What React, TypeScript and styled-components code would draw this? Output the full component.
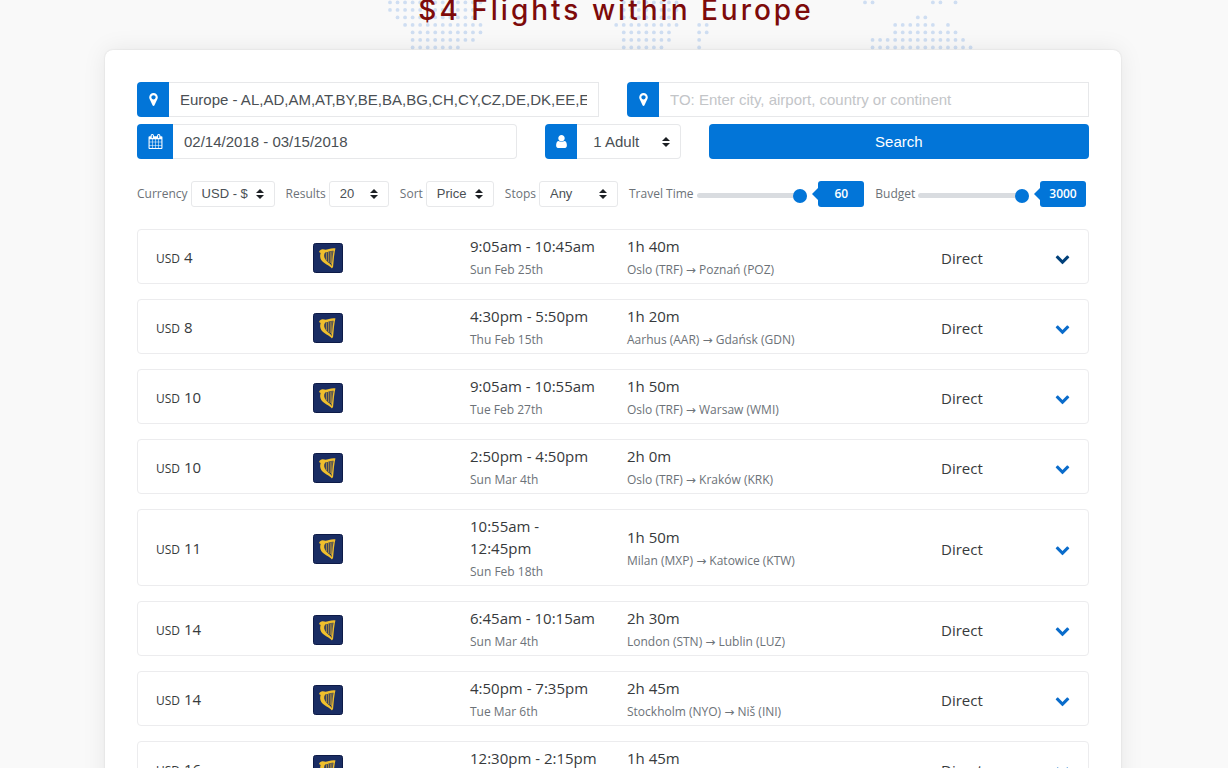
import React, { useState } from "react";
import styled, { createGlobalStyle } from "styled-components";

const BLUE = "#0275d8";
const SANS = `"Liberation Sans", Arial, sans-serif`;

const GlobalStyle = createGlobalStyle`
  *, *::before, *::after { box-sizing: border-box; }
  body {
    margin: 0;
    background: #f9f9f9;
    color: #373a3c;
    font: 15px/22px "Open Sans", "Noto Sans", sans-serif;
    overflow-x: hidden;
  }
`;

const Page = styled.main`
  padding: 0 107px 0 105px;
`;

const Header = styled.header`
  position: relative;
  height: 50px;
  display: flex;
  align-items: flex-end;
  justify-content: center;
`;

const Title = styled.h1`
  position: relative;
  flex: none;
  margin: 0;
  padding: 0 0 20px 6px;
  color: #7d0a0a;
  font: 500 28px/40px Inter, "Open Sans", sans-serif;
  letter-spacing: 3px;
  white-space: nowrap;
`;

const DotMap = styled.svg`
  position: absolute;
  left: 50%;
  bottom: 0;
  width: 600px;
  height: 50px;
  margin-left: -227px;
  fill: #cfdef2;
`;

const Card = styled.section`
  position: relative;
  padding: 32px;
  background: #fff;
  border-radius: 8px 8px 0 0;
  box-shadow: 0 0 24px rgba(0, 0, 0, 0.08), 0 0 2px rgba(0, 0, 0, 0.12);
`;

const SearchForm = styled.form`
  display: grid;
  grid-template-columns: repeat(12, minmax(0, 1fr));
  gap: 7px 28px;
`;

const Field = styled.label<{ $span: number }>`
  grid-column: span ${(p) => p.$span};
  display: flex;
  height: 35px;
`;

const Addon = styled.span<{ $wide?: boolean }>`
  flex: none;
  display: flex;
  align-items: center;
  justify-content: center;
  width: ${(p) => (p.$wide ? 36 : 32)}px;
  background: ${BLUE};
  color: #fff;
  border-radius: 4px 0 0 4px;
`;

const TextInput = styled.input<{ $rounded?: boolean }>`
  flex: 1;
  min-width: 0;
  height: 35px;
  padding: 0 11px;
  border: 1px solid #e7e8ea;
  border-left: 0;
  border-radius: ${(p) => (p.$rounded ? "0 4px 4px 0" : "0")};
  background: #fff;
  color: #4a4f54;
  font: 15px/22px ${SANS};
  outline: none;
  &::placeholder { color: #c3c5c8; opacity: 1; }
`;

const SelectWrap = styled.span<{ $w?: number }>`
  position: relative;
  display: flex;
  ${(p) => (p.$w ? `width: ${p.$w}px;` : "flex: 1; min-width: 0;")}
`;

const Select = styled.select<{ $large?: boolean }>`
  appearance: none;
  width: 100%;
  height: ${(p) => (p.$large ? 35 : 26)}px;
  padding: 0 ${(p) => (p.$large ? "24px 0 16px" : "20px 0 10px")};
  border: 1px solid #e7e8ea;
  ${(p) => p.$large && "border-left: 0;"}
  border-radius: ${(p) => (p.$large ? "0 4px 4px 0" : "3px")};
  background: #fff;
  color: #4a4f54;
  font: ${(p) => (p.$large ? 15 : 13)}px/22px ${SANS};
  outline: none;
`;

const Caret = styled.svg`
  position: absolute;
  right: 11px;
  top: 50%;
  width: 8px;
  height: 10px;
  margin-top: -5px;
  fill: #1d2024;
  pointer-events: none;
`;

const SearchButton = styled.button`
  grid-column: span 5;
  height: 35px;
  border: 0;
  border-radius: 4px;
  background: ${BLUE};
  color: #fff;
  font: 15px/22px ${SANS};
  cursor: pointer;
`;

const Filters = styled.div`
  display: flex;
  align-items: center;
  gap: 11px;
  margin: 22px 3px 22px 0;
  color: #6c7278;
  font-size: 12px;
`;

const Filter = styled.label`
  display: flex;
  align-items: center;
  gap: 3px;
  white-space: nowrap;
`;

const RangeFilter = styled(Filter)`
  flex: 1 1 auto;
`;

const Range = styled.input`
  appearance: none;
  flex: 1 1 auto;
  min-width: 0;
  width: 100px;
  height: 14px;
  margin: 3px 0 0;
  background: transparent;
  &::-webkit-slider-runnable-track {
    height: 5px;
    border-radius: 3px;
    background: #d9dce0;
  }
  &::-webkit-slider-thumb {
    appearance: none;
    width: 14px;
    height: 14px;
    margin-top: -4px;
    border-radius: 50%;
    background: ${BLUE};
  }
`;

const Bubble = styled.output`
  position: relative;
  flex: none;
  width: 46px;
  height: 26px;
  margin-left: 8px;
  border-radius: 3px;
  background: ${BLUE};
  color: #fff;
  font-weight: 600;
  line-height: 26px;
  text-align: center;
  &::before {
    content: "";
    position: absolute;
    left: -6px;
    top: 7px;
    border: solid transparent;
    border-width: 6px 6px 6px 0;
    border-right-color: ${BLUE};
  }
`;

const Results = styled.ul`
  display: grid;
  gap: 15px;
  margin: 0;
  padding: 0;
  list-style: none;
`;

const Flight = styled.li`
  display: grid;
  grid-template-columns: repeat(6, minmax(0, 1fr));
  column-gap: 28px;
  align-items: center;
  padding: 5px 18px 3px;
  border: 1px solid #ececee;
  border-radius: 4px;
`;

const Cell = styled.div<{ $span?: number }>`
  grid-column: span ${(p) => p.$span ?? 1};
`;

const Main = styled.div`
  font-size: 15px;
  line-height: 22px;
`;

const Sub = styled.div`
  padding-top: 3px;
  color: #6c7278;
  font-size: 12px;
  line-height: 20px;
`;

const Unit = styled.span`
  font-size: 12px;
`;

const Arrow = styled.span`
  font-family: "DejaVu Sans", sans-serif;
  line-height: 12px;
`;

const Logo = styled.svg`
  display: block;
  width: 30px;
  height: 30px;
`;

const StopsCell = styled(Cell)`
  display: flex;
  align-items: center;
  justify-content: space-between;
`;

const Expand = styled.button<{ $active?: boolean }>`
  display: flex;
  padding: 2px 0 0;
  border: 0;
  background: none;
  color: ${(p) => (p.$active ? "#01407a" : "#0a6ccb")};
  cursor: pointer;
`;

const ICONS = {
  marker:
    "M1152 640q0-106-75-181t-181-75-181 75-75 181 75 181 181 75 181-75 75-181zm256 0q0 109-33 179l-364 774q-16 33-47.5 52t-67.5 19-67.5-19-46.5-52l-365-774q-33-70-33-179 0-212 150-362t362-150 362 150 150 362z",
  calendar:
    "M192 1664h288v-288h-288v288zm352 0h320v-288h-320v288zm-352-352h288v-320h-288v320zm352 0h320v-320h-320v320zm-352-384h288v-288h-288v288zm736 736h320v-288h-320v288zm-384-736h320v-288h-320v288zm768 736h288v-288h-288v288zm-384-352h320v-320h-320v320zm-352-864v-288q0-13-9.5-22.5t-22.5-9.5h-64q-13 0-22.5 9.5t-9.5 22.5v288q0 13 9.5 22.5t22.5 9.5h64q13 0 22.5-9.5t9.5-22.5zm736 864h288v-320h-288v320zm-384-384h320v-288h-320v288zm384 0h288v-288h-288v288zm32-480v-288q0-13-9.5-22.5t-22.5-9.5h-64q-13 0-22.5 9.5t-9.5 22.5v288q0 13 9.5 22.5t22.5 9.5h64q13 0 22.5-9.5t9.5-22.5zm384-64v1280q0 52-38 90t-90 38h-1408q-52 0-90-38t-38-90v-1280q0-52 38-90t90-38h128v-96q0-66 47-113t113-47h64q66 0 113 47t47 113v96h384v-96q0-66 47-113t113-47h64q66 0 113 47t47 113v96h128q52 0 90 38t38 90z",
  user:
    "M1536 1399q0 109-62.5 187t-150.5 78h-854q-88 0-150.5-78t-62.5-187q0-85 8.5-160.5t31.5-152 58.5-131 94-89 134.5-34.5q131 128 313 128t313-128q76 0 134.5 34.5t94 89 58.5 131 31.5 152 8.5 160.5zm-256-887q0 159-112.5 271.5t-271.5 112.5-271.5-112.5-112.5-271.5 112.5-271.5 271.5-112.5 271.5 112.5 112.5 271.5z",
  chevron:
    "M1683 808l-742 741q-19 19-45 19t-45-19l-742-741q-19-19-19-45.5t19-45.5l166-165q19-19 45-19t45 19l531 531 531-531q19-19 45-19t45 19l166 165q19 19 19 45.5t-19 45.5z",
};

const Icon = ({ name, size = 15 }: { name: keyof typeof ICONS; size?: number }) => (
  <svg width={size} height={size} viewBox="0 0 1792 1792" fill="currentColor" aria-hidden="true">
    <path d={ICONS[name]} />
  </svg>
);

/* Each row of the world map lists runs of dots as [first column, last column]. */
const MAP_ROWS: [number, number][][] = [
  [[0, 12], [31, 38], [63, 64], [72, 73], [75, 75]],
  [[0, 12], [31, 38]],
  [[1, 11], [31, 37], [70, 71]],
  [[2, 12], [30, 38], [41, 42], [67, 72], [74, 74]],
  [[3, 12], [31, 37], [41, 42], [67, 75]],
  [[3, 11], [31, 37], [41, 41], [64, 76]],
  [[3, 9], [31, 36], [41, 41], [64, 77]],
];

const WorldDots = () => (
  <DotMap viewBox="0 0 600 50" aria-hidden="true">
    {MAP_ROWS.flatMap((runs, row) =>
      runs.flatMap(([from, to]) =>
        Array.from({ length: to - from + 1 }, (_, i) => (
          <circle key={`${row}-${from + i}`} cx={4 + (from + i) * 7.54} cy={2.4 + row * 7.5} r={1.9} />
        ))
      )
    )}
  </DotMap>
);

const HarpLogo = () => (
  <Logo viewBox="0 0 30 30" role="img" aria-label="Ryanair">
    <rect x="0.5" y="0.5" width="29" height="29" rx="2" fill="#1a2d63" stroke="#0d1a47" />
    <path
      d="M6 9C7 6.500 9 5.600 11 6.600C14 7.400 17 4.800 22.500 5.400L21.800 8C17.500 7.300 15.500 9.600 12.200 9.600C10.600 11.500 11 15 13 17.200C15 19.500 18.500 21.500 19.500 24L19 25.500C16 22 11 20.800 8.400 17.200C6.800 14.800 7 12 7.600 10Z"
      fill="#f0bf2c"
    />
    <path d="M21.300 7L20.300 14L19.300 24.500" fill="none" stroke="#f0bf2c" strokeWidth="1.400" />
    <path
      d="M13.300 9.600V17.500M15.300 9V19M17.200 8.400V20M19 8L18.600 21.500"
      fill="none"
      stroke="#cda53a"
      strokeWidth="0.900"
    />
  </Logo>
);

const Dropdown = ({
  label,
  options,
  width,
  large,
}: {
  label: string;
  options: string[];
  width?: number;
  large?: boolean;
}) => (
  <SelectWrap $w={width}>
    <Select $large={large} aria-label={label} defaultValue={options[0]}>
      {options.map((o) => (
        <option key={o}>{o}</option>
      ))}
    </Select>
    <Caret viewBox="0 0 8 10" aria-hidden="true">
      <path d="M4 0L8 4H0zM4 10L0 6H8z" />
    </Caret>
  </SelectWrap>
);

const Slider = ({ label, max }: { label: string; max: number }) => {
  const [value, setValue] = useState(max);
  return (
    <RangeFilter>
      {label}
      <Range
        type="range"
        aria-label={label}
        min={0}
        max={max}
        value={value}
        onChange={(e) => setValue(Number(e.target.value))}
      />
      <Bubble>{value}</Bubble>
    </RangeFilter>
  );
};

type FlightData = { price: number; time: string; date: string; duration: string; from: string; to: string };

const FLIGHTS: FlightData[] = [
  { price: 4, time: "9:05am - 10:45am", date: "Sun Feb 25th", duration: "1h 40m", from: "Oslo (TRF)", to: "Poznań (POZ)" },
  { price: 8, time: "4:30pm - 5:50pm", date: "Thu Feb 15th", duration: "1h 20m", from: "Aarhus (AAR)", to: "Gdańsk (GDN)" },
  { price: 10, time: "9:05am - 10:55am", date: "Tue Feb 27th", duration: "1h 50m", from: "Oslo (TRF)", to: "Warsaw (WMI)" },
  { price: 10, time: "2:50pm - 4:50pm", date: "Sun Mar 4th", duration: "2h 0m", from: "Oslo (TRF)", to: "Kraków (KRK)" },
  { price: 11, time: "10:55am - 12:45pm", date: "Sun Feb 18th", duration: "1h 50m", from: "Milan (MXP)", to: "Katowice (KTW)" },
  { price: 14, time: "6:45am - 10:15am", date: "Sun Mar 4th", duration: "2h 30m", from: "London (STN)", to: "Lublin (LUZ)" },
  { price: 14, time: "4:50pm - 7:35pm", date: "Tue Mar 6th", duration: "2h 45m", from: "Stockholm (NYO)", to: "Niš (INI)" },
  { price: 16, time: "12:30pm - 2:15pm", date: "Wed Mar 7th", duration: "1h 45m", from: "Oslo (TRF)", to: "Vilnius (VNO)" },
];

const FlightRow = ({ flight, active }: { flight: FlightData; active: boolean }) => (
  <Flight>
    <Cell>
      <Main>
        <Unit>USD</Unit> {flight.price}
      </Main>
    </Cell>
    <Cell>
      <HarpLogo />
    </Cell>
    <Cell>
      <Main>{flight.time}</Main>
      <Sub>{flight.date}</Sub>
    </Cell>
    <Cell $span={2}>
      <Main>{flight.duration}</Main>
      <Sub>
        {flight.from} <Arrow>→</Arrow> {flight.to}
      </Sub>
    </Cell>
    <StopsCell>
      <Main>Direct</Main>
      <Expand type="button" $active={active} aria-label="Show flight details">
        <Icon name="chevron" />
      </Expand>
    </StopsCell>
  </Flight>
);

export default function App() {
  return (
    <>
      <GlobalStyle />
      <Page>
        <Header>
          <WorldDots />
          <Title>$4 Flights within Europe</Title>
        </Header>
        <Card>
          <SearchForm onSubmit={(e) => e.preventDefault()}>
            <Field $span={6}>
              <Addon>
                <Icon name="marker" />
              </Addon>
              <TextInput
                aria-label="From"
                defaultValue="Europe - AL,AD,AM,AT,BY,BE,BA,BG,CH,CY,CZ,DE,DK,EE,ES,FI,FR,GB"
              />
            </Field>
            <Field $span={6}>
              <Addon>
                <Icon name="marker" />
              </Addon>
              <TextInput aria-label="To" placeholder="TO: Enter city, airport, country or continent" />
            </Field>
            <Field $span={5}>
              <Addon $wide>
                <Icon name="calendar" />
              </Addon>
              <TextInput $rounded aria-label="Dates" defaultValue="02/14/2018 - 03/15/2018" />
            </Field>
            <Field $span={2}>
              <Addon>
                <Icon name="user" />
              </Addon>
              <Dropdown large label="Passengers" options={["1 Adult", "2 Adults", "3 Adults"]} />
            </Field>
            <SearchButton type="submit">Search</SearchButton>
          </SearchForm>
          <Filters>
            <Filter>
              Currency
              <Dropdown label="Currency" width={84} options={["USD - $", "EUR - €"]} />
            </Filter>
            <Filter>
              Results
              <Dropdown label="Results" width={60} options={["20", "50"]} />
            </Filter>
            <Filter>
              Sort
              <Dropdown label="Sort" width={68} options={["Price", "Time"]} />
            </Filter>
            <Filter>
              Stops
              <Dropdown label="Stops" width={79} options={["Any", "Direct"]} />
            </Filter>
            <Slider label="Travel Time" max={60} />
            <Slider label="Budget" max={3000} />
          </Filters>
          <Results>
            {FLIGHTS.map((flight, i) => (
              <FlightRow key={i} flight={flight} active={i === 0} />
            ))}
          </Results>
        </Card>
      </Page>
    </>
  );
}
